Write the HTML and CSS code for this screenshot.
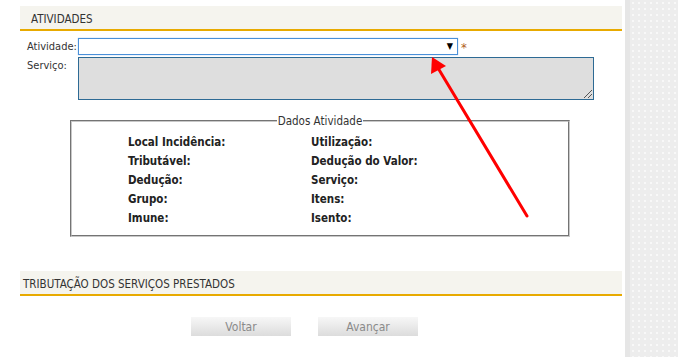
FILE: index.html
```html
<!DOCTYPE html>
<html lang="pt-BR">
<head>
  <meta charset="UTF-8" />
  <title>Atividades</title>
  <link rel="stylesheet" href="styles.css">
</head>
<body>
  <div class="page">
    <div class="main">
      <div class="section-title first">ATIVIDADES</div>

      <div class="form">
        <label class="lbl">Atividade:</label>
        <div class="field-line">
          <div class="select"><span class="caret">&#9660;</span></div>
          <span class="req">*</span>
        </div>
        <label class="lbl">Serviço:</label>
        <div class="textarea"><span class="grip"></span></div>
      </div>

      <fieldset class="dados">
        <legend>Dados Atividade</legend>
        <div class="dados-grid">
          <div>Local Incidência:</div><div>Utilização:</div>
          <div>Tributável:</div><div>Dedução do Valor:</div>
          <div>Dedução:</div><div>Serviço:</div>
          <div>Grupo:</div><div>Itens:</div>
          <div>Imune:</div><div>Isento:</div>
        </div>
      </fieldset>

      <div class="section-title second">TRIBUTAÇÃO DOS SERVIÇOS PRESTADOS</div>

      <div class="buttons">
        <button class="btn">Voltar</button>
        <button class="btn">Avançar</button>
      </div>
    </div>
    <div class="side"></div>
  </div>

  <!-- annotation arrow drawn over the page -->
  <svg class="arrow" width="678" height="357" viewBox="0 0 678 357">
    <line x1="527" y1="216" x2="438" y2="68" stroke="#ff0000" stroke-width="3" stroke-linecap="round" />
    <polygon points="432,57 431,74 446,66" fill="#ff0000" />
  </svg>
</body>
</html>
```

FILE: styles.css
```css
body {
  margin: 0;
  font-family: "DejaVu Sans Condensed", "DejaVu Sans", sans-serif;
  font-size: 11px;
  color: #333;
  background: #fff;
}
.page {
  display: flex;
  width: 678px;
  height: 357px;
  overflow: hidden;
}
.main {
  width: 625px;
  flex: none;
}
.side {
  flex: 1;
  border-left: 5px solid #e6e6e6;
  background-color: #ededed;
  background-image: radial-gradient(circle, #f8f8f8 1px, transparent 1.2px);
  background-size: 6px 6px;
}
.section-title {
  margin-left: 20px;
  width: 602px;
  height: 23px;
  line-height: 27px;
  background: #f5f4ee;
  border-bottom: 2px solid #e8aa00;
  color: #333;
  font-size: 11.5px;
  box-sizing: content-box;
}
.section-title.first {
  margin-top: 6px;
  padding-left: 11px;
  width: 591px;
}
.section-title.second {
  margin-top: 34px;
  padding-left: 3px;
  width: 599px;
}
.form {
  display: grid;
  grid-template-columns: 51px auto;
  row-gap: 2px;
  margin-top: 7px;
  padding-left: 27px;
}
.lbl {
  font-size: 11px;
  line-height: 17px;
  color: #333;
}
.field-line {
  display: flex;
  align-items: center;
  gap: 3px;
}
.select {
  width: 378px;
  height: 15px;
  border: 1px solid #4a90d9;
  box-shadow: 0 0 1px #8ab8ec;
  background: #fff;
  position: relative;
}
.caret {
  position: absolute;
  right: 4px;
  top: 2px;
  font-size: 9px;
  line-height: 11px;
  color: #000;
}
.req {
  color: #b0601c;
  font-size: 13px;
  line-height: 11px;
  margin-top: 2px;
}
.textarea {
  width: 514px;
  height: 41px;
  border: 1px solid #2d6a94;
  background: #dedede;
  position: relative;
}
.grip {
  position: absolute;
  right: 1px;
  bottom: 1px;
  width: 8px;
  height: 8px;
  background: linear-gradient(135deg, transparent 45%, #555 45%, #555 52%, transparent 52%, transparent 70%, #555 70%, #555 77%, transparent 77%);
}
.dados {
  margin: 14px 0 0 70px;
  width: 500px;
  height: 123px;
  box-sizing: border-box;
  padding: 0;
  border: 2px groove #c8c8c8;
  min-width: 0;
}
.dados legend {
  margin: 0 auto;
  padding: 0 1px;
  font-size: 11.5px;
  color: #333;
}
.dados-grid {
  display: grid;
  grid-template-columns: 183px auto;
  grid-auto-rows: 19px;
  padding: 5px 0 0 56px;
  font-size: 11.5px;
  font-weight: bold;
  color: #222;
  line-height: 19px;
}
.buttons {
  display: flex;
  gap: 27px;
  margin-top: 21px;
  padding-left: 191px;
}
.btn {
  width: 100px;
  height: 19px;
  padding: 0;
  border: none;
  background: linear-gradient(#f7f7f7, #dcdcdc);
  color: #8a8a8a;
  font-family: inherit;
  font-size: 12px;
}
.arrow {
  position: absolute;
  left: 0;
  top: 0;
  pointer-events: none;
}
```
